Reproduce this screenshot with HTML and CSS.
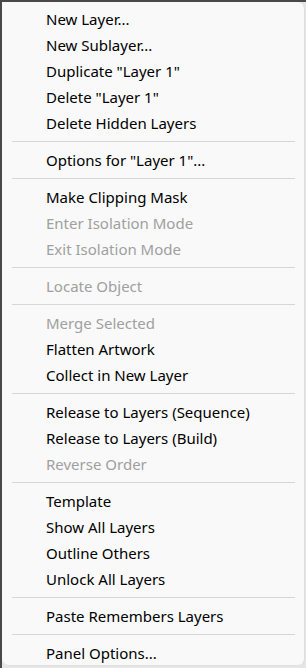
FILE: index.html
```html
<!DOCTYPE html>
<html>
<head>
<meta charset="utf-8">
<link rel="stylesheet" href="styles.css">
</head>
<body>
<div class="frame">
  <div class="menu">
    <div class="item">New Layer...</div>
    <div class="item">New Sublayer...</div>
    <div class="item">Duplicate "Layer 1"</div>
    <div class="item">Delete "Layer 1"</div>
    <div class="item">Delete Hidden Layers</div>
    <div class="sep"></div>
    <div class="item">Options for "Layer 1"...</div>
    <div class="sep"></div>
    <div class="item">Make Clipping Mask</div>
    <div class="item disabled">Enter Isolation Mode</div>
    <div class="item disabled">Exit Isolation Mode</div>
    <div class="sep"></div>
    <div class="item disabled">Locate Object</div>
    <div class="sep"></div>
    <div class="item disabled">Merge Selected</div>
    <div class="item">Flatten Artwork</div>
    <div class="item">Collect in New Layer</div>
    <div class="sep"></div>
    <div class="item">Release to Layers (Sequence)</div>
    <div class="item">Release to Layers (Build)</div>
    <div class="item disabled">Reverse Order</div>
    <div class="sep"></div>
    <div class="item">Template</div>
    <div class="item">Show All Layers</div>
    <div class="item">Outline Others</div>
    <div class="item">Unlock All Layers</div>
    <div class="sep"></div>
    <div class="item">Paste Remembers Layers</div>
    <div class="sep"></div>
    <div class="item">Panel Options...</div>
  </div>
</div>
</body>
</html>
```
FILE: styles.css
```css
html, body {
  margin: 0;
  padding: 0;
  background: #e6e6e6;
}
.frame {
  height: 666px;
  border-top: 2px solid #494949;
  border-left: 2px solid #494949;
  overflow: hidden;
}
.menu {
  box-sizing: border-box;
  width: 303px;
  height: 664px;
  background: #f9f9f9;
  border-right: 1px solid #dcdcdc;
  border-bottom: 1px solid #e2e2e2;
  border-radius: 0 7px 7px 7px;
  padding-top: 4px;
  font-family: "Noto Sans", "Open Sans", sans-serif;
  font-size: 15px;
  color: #000;
}
.item {
  height: 26px;
  line-height: 26px;
  padding-left: 44px;
  white-space: nowrap;
}
.item.disabled {
  color: #a0a0a0;
}
.sep {
  height: 1px;
  background: #d6d6d6;
  margin: 5px 9px 5px 10px;
}
.sep:first-of-type {
  margin-top: 4px;
}
```
